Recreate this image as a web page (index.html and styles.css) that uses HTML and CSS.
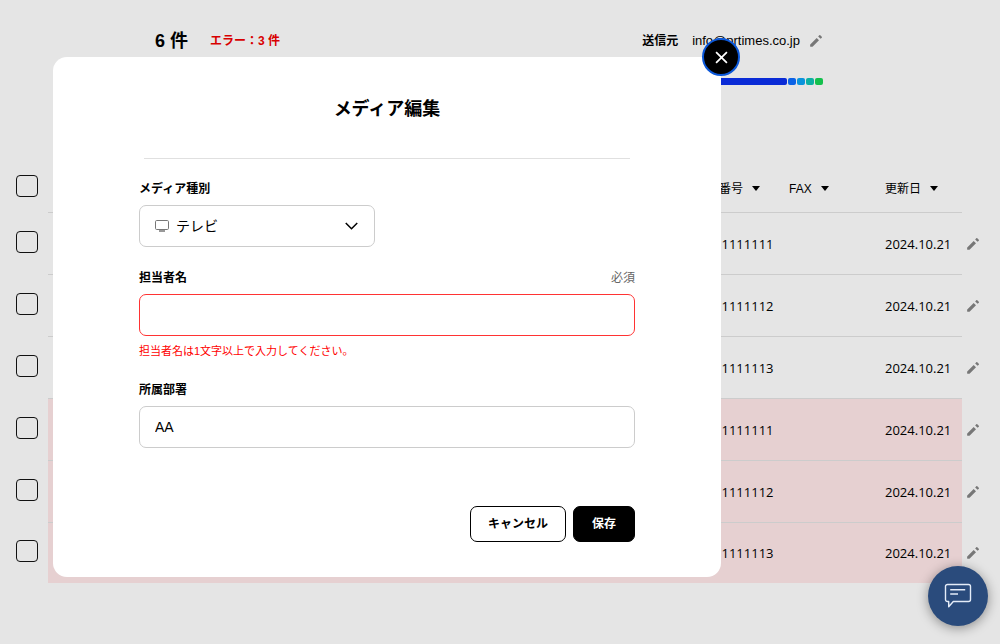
FILE: index.html
```html
<!DOCTYPE html>
<html lang="ja">
<head>
<meta charset="utf-8">
<meta name="viewport" content="width=device-width, initial-scale=1">
<title>メディア編集</title>
<link rel="stylesheet" href="styles.css">
</head>
<body>
<svg class="sprite" aria-hidden="true">
  <symbol id="pencil" viewBox="0 0 24 24">
    <path d="M3.200 18v1.700c0 .7.4 1.100 1.100 1.100H6c.5 0 .9-.2 1.200-.5L16.500 11 13 7.500 3.700 16.800c-.3.3-.5.7-.5 1.200zM20.700 7c.4-.4.4-1 0-1.400l-2.300-2.300c-.4-.4-1-.4-1.400 0l-1.800 1.800 3.700 3.700z"/>
  </symbol>
</svg>

<main class="page">
  <header class="summary">
    <div class="counts">
      <span class="total">6 件</span>
      <span class="errors">エラー：3 件</span>
    </div>
    <div class="sender">
      <div class="sender-row">
        <span class="sender-label">送信元</span>
        <span class="sender-mail">info@prtimes.co.jp</span>
        <button class="edit" type="button" aria-label="送信元を編集"><svg><use href="#pencil"/></svg></button>
      </div>
      <div class="progress">
        <span class="bar"></span><span class="dot dot-1"></span><span class="dot dot-2"></span><span class="dot dot-3"></span><span class="dot dot-4"></span>
      </div>
    </div>
  </header>

  <table class="list">
    <colgroup><col class="col-check"><col><col class="col-phone"><col class="col-fax"><col class="col-date"><col class="col-edit"></colgroup>
    <thead>
      <tr>
        <th class="check"><input type="checkbox" aria-label="すべて選択"></th>
        <th></th>
        <th><button class="sort" type="button">電話番号<i class="caret"></i></button></th>
        <th><button class="sort" type="button">FAX<i class="caret"></i></button></th>
        <th><button class="sort" type="button">更新日<i class="caret"></i></button></th>
        <th class="tool"></th>
      </tr>
    </thead>
    <tbody>
      <tr><td class="check"><input type="checkbox" aria-label="1行目を選択"></td><td></td><td>03-11111111</td><td></td><td>2024.10.21</td><td class="tool"><button class="edit" type="button" aria-label="1行目を編集"><svg><use href="#pencil"/></svg></button></td></tr>
      <tr><td class="check"><input type="checkbox" aria-label="2行目を選択"></td><td></td><td>03-11111112</td><td></td><td>2024.10.21</td><td class="tool"><button class="edit" type="button" aria-label="2行目を編集"><svg><use href="#pencil"/></svg></button></td></tr>
      <tr><td class="check"><input type="checkbox" aria-label="3行目を選択"></td><td></td><td>03-11111113</td><td></td><td>2024.10.21</td><td class="tool"><button class="edit" type="button" aria-label="3行目を編集"><svg><use href="#pencil"/></svg></button></td></tr>
      <tr class="invalid"><td class="check"><input type="checkbox" aria-label="4行目を選択"></td><td></td><td>03-11111111</td><td></td><td>2024.10.21</td><td class="tool"><button class="edit" type="button" aria-label="4行目を編集"><svg><use href="#pencil"/></svg></button></td></tr>
      <tr class="invalid"><td class="check"><input type="checkbox" aria-label="5行目を選択"></td><td></td><td>03-11111112</td><td></td><td>2024.10.21</td><td class="tool"><button class="edit" type="button" aria-label="5行目を編集"><svg><use href="#pencil"/></svg></button></td></tr>
      <tr class="invalid"><td class="check"><input type="checkbox" aria-label="6行目を選択"></td><td></td><td>03-11111113</td><td></td><td>2024.10.21</td><td class="tool"><button class="edit" type="button" aria-label="6行目を編集"><svg><use href="#pencil"/></svg></button></td></tr>
    </tbody>
  </table>
</main>

<div class="overlay">
  <section class="modal" role="dialog" aria-labelledby="modal-title">
    <button class="close" type="button" aria-label="閉じる">
      <svg viewBox="0 0 12 12"><path d="M1 1l10 10M11 1L1 11"/></svg>
    </button>
    <h1 class="title" id="modal-title">メディア編集</h1>
    <hr class="divider">
    <form class="form">
      <div class="field">
        <label class="label" for="kind">メディア種別</label>
        <div class="select-wrap">
          <select class="control select" id="kind"><option>テレビ</option></select>
          <svg class="tv" viewBox="0 0 14 12"><rect x=".5" y=".5" width="13" height="9" rx="1.200"/><path d="M4 11h6" stroke-width="1.500"/></svg>
          <svg class="chevron" viewBox="0 0 12 7"><path d="M.7.7L6 6 11.300.7"/></svg>
        </div>
      </div>
      <div class="field">
        <div class="label-row">
          <label class="label" for="person">担当者名</label>
          <span class="required">必須</span>
        </div>
        <input class="control has-error" id="person" type="text" aria-describedby="person-error">
        <p class="message" id="person-error">担当者名は1文字以上で入力してください。</p>
      </div>
      <div class="field">
        <label class="label" for="dept">所属部署</label>
        <input class="control" id="dept" type="text" value="AA">
      </div>
      <div class="actions">
        <button class="btn" type="button">キャンセル</button>
        <button class="btn primary" type="button">保存</button>
      </div>
    </form>
  </section>
</div>

<button class="chat" type="button" aria-label="チャット">
  <svg viewBox="0 0 28 26"><path d="M3.500 1.500h21a2 2 0 0 1 2 2v13a2 2 0 0 1-2 2H9.300L4.700 23.700v-5.200H3.500a2 2 0 0 1-2-2v-13a2 2 0 0 1 2-2zM6.200 6.700h15M6.200 11h7.800"/></svg>
</button>
</body>
</html>
```
FILE: styles.css
```css
*,
*::before,
*::after {
  box-sizing: border-box;
}

body {
  margin: 0;
  min-height: 100vh;
  position: relative;
  background: #e5e5e5;
  color: #000;
  font-family: "Liberation Sans", "Noto Sans CJK JP", sans-serif;
  font-size: 13px;
  line-height: 20px;
}

button,
input,
select {
  font: inherit;
  color: inherit;
}

button {
  padding: 0;
  border: 0;
  background: none;
  cursor: pointer;
}

svg {
  display: block;
}

.sprite {
  display: none;
}

/* Summary above the list */
.summary {
  display: flex;
  justify-content: space-between;
  padding: 31px 176px 0 155px;
}

.counts {
  display: flex;
  align-items: center;
  height: 20px;
  gap: 22px;
  font-weight: bold;
}

.total {
  font-size: 18px;
}

.errors {
  color: #d80000;
  font-size: 12px;
}

.sender-row {
  display: flex;
  align-items: center;
}

.sender-label {
  margin-right: 14px;
  font-size: 12px;
  font-weight: bold;
}

.sender-mail {
  margin-right: 8px;
}

.edit {
  display: block;
}

.edit svg {
  width: 16px;
  height: 16px;
  fill: #777;
}

.progress {
  display: flex;
  gap: 1px;
  margin: 27px 1px 0 0;
}

.bar,
.dot {
  height: 7px;
  border-radius: 2px;
}

.bar {
  flex: 1;
  background: #0a2bd6;
}

.dot {
  width: 8px;
}

.dot-1 { background: #0b62e6; }
.dot-2 { background: #0a93dc; }
.dot-3 { background: #0cb0a2; }
.dot-4 { background: #14c04c; }

/* List */
.list {
  width: 100%;
  margin-top: 78px;
  table-layout: fixed;
  border-spacing: 0;
}

.col-check { width: 48px; }
.col-phone { width: 94px; }
.col-fax { width: 96px; }
.col-date { width: 77px; }
.col-edit { width: 38px; }

.list th,
.list td {
  padding: 0;
  text-align: left;
  white-space: nowrap;
  border-bottom: 1px solid #ccc;
}

.list th {
  height: 50px;
  padding-top: 2px;
  font-size: 12px;
  font-weight: normal;
}

.list td {
  height: 62px;
  font-family: "Open Sans", "Noto Sans CJK JP", sans-serif;
}

.list tbody tr:last-child td {
  height: 60px;
  border-bottom: 0;
}

.list .invalid td {
  background: #e6d0d1;
}

.list .check,
.list .tool,
.list .invalid .check,
.list .invalid .tool {
  border-bottom: 0;
  background: none;
}

.list .check {
  padding: 0 0 4px 16px;
}

.list .check input {
  display: block;
  width: 22px;
  height: 22px;
  margin: 0;
  appearance: none;
  border: 1px solid #111;
  border-radius: 4px;
}

.list .tool {
  padding-left: 3px;
}

.sort {
  display: flex;
  align-items: center;
  gap: 9px;
}

.caret {
  border: 4px solid transparent;
  border-top: 5px solid #000;
  border-bottom: 0;
}

/* Modal */
.overlay {
  position: absolute;
  inset: 0;
  padding: 57px 279px 0 53px;
}

.modal {
  position: relative;
  padding: 39px 86px 35px;
  border-radius: 14px;
  background: #fff;
}

.close {
  position: absolute;
  top: -19px;
  right: -19px;
  display: grid;
  place-items: center;
  width: 38px;
  height: 38px;
  border: 2px solid #0b57d8;
  border-radius: 50%;
  background: #000;
}

.close svg {
  width: 13px;
  height: 13px;
  fill: none;
  stroke: #fff;
  stroke-width: 1.6;
}

.title {
  margin: 0;
  font-size: 18px;
  line-height: 27px;
  text-align: center;
}

.divider {
  height: 1px;
  margin: 35px 5px 20px;
  border: 0;
  background: #e0e0e0;
}

.field {
  margin-bottom: 21px;
}

.label {
  display: block;
  font-size: 12px;
  font-weight: bold;
}

.label-row {
  display: flex;
  justify-content: space-between;
}

.required {
  color: #666;
  font-size: 12px;
}

.control {
  display: block;
  width: 100%;
  height: 42px;
  margin-top: 6px;
  padding: 0 15px;
  border: 1px solid #ccc;
  border-radius: 7px;
  outline: 0;
  background: #fff;
  font-size: 14px;
}

.has-error {
  border-color: #f33;
}

.select-wrap {
  position: relative;
  width: 236px;
}

.select {
  padding: 0 36px;
  appearance: none;
}

.tv,
.chevron {
  position: absolute;
  top: 0;
  bottom: 0;
  margin: auto 0;
  fill: none;
  pointer-events: none;
}

.tv {
  left: 16px;
  width: 14px;
  height: 12px;
  stroke: #777;
}

.chevron {
  right: 17px;
  width: 13px;
  height: 8px;
  stroke: #000;
  stroke-width: 1.4;
}

.message {
  margin: 7px 0 0;
  color: #f00;
  font-size: 11px;
  line-height: 16px;
}

.actions {
  display: flex;
  justify-content: flex-end;
  gap: 7px;
  margin-top: 58px;
}

.btn {
  height: 36px;
  padding: 0 17px;
  border: 1px solid #000;
  border-radius: 7px;
  background: #fff;
  font-size: 12px;
  font-weight: bold;
}

.primary {
  padding: 0 18px;
  background: #000;
  color: #fff;
}

/* Chat launcher */
.chat {
  position: fixed;
  right: 12px;
  bottom: 18px;
  display: grid;
  place-items: center;
  width: 60px;
  height: 60px;
  border-radius: 50%;
  background: #2a4b7c;
  box-shadow: 0 2px 12px rgba(0, 0, 0, .4);
}

.chat svg {
  width: 28px;
  height: 26px;
  fill: none;
  stroke: #e4ecf8;
  stroke-width: 1.4;
  stroke-linejoin: round;
}
```
